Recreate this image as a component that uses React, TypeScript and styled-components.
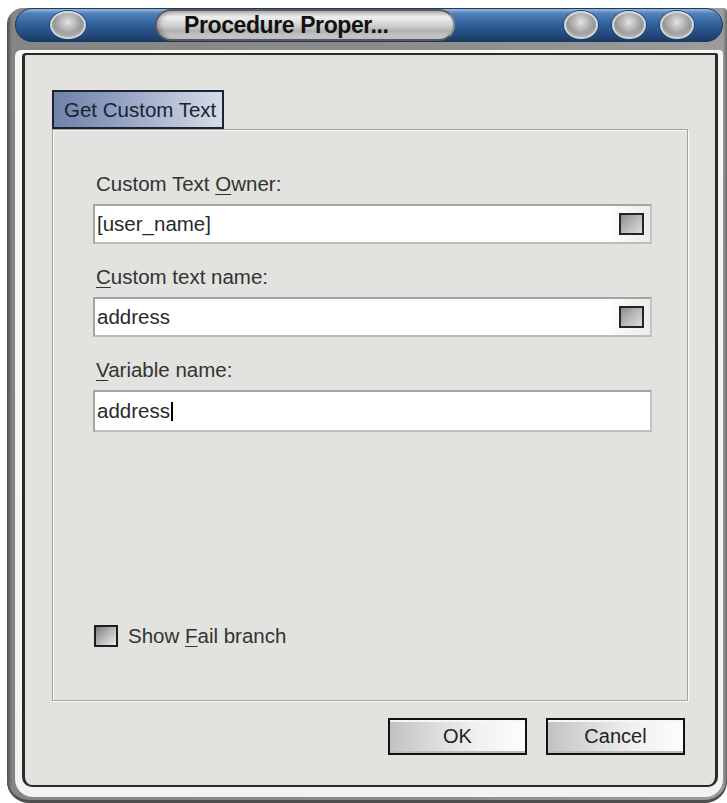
import styled, { createGlobalStyle } from "styled-components";

const GlobalStyle = createGlobalStyle`
  html, body {
    margin: 0;
    padding: 0;
    background: #ffffff;
  }
  body {
    font-family: "Liberation Sans", Arial, sans-serif;
  }
`;

// outer metal frame, the title bar sits on top of it
const Window = styled.div`
  margin: 8px 0 0 7px;
  width: 720px;
  height: 795px;
  box-sizing: border-box;
  padding: 0 4px 6px 8px;
  display: flex;
  flex-direction: column;
  background: linear-gradient(90deg, #4f4f4f 0, #858585 5px, #8a8a8a 50%, #9c9c9c calc(100% - 4px), #6b6b6b 100%);
  border-radius: 16px 4px 22px 22px;
  box-shadow: inset 0 -3px 0 #4e4e4e;
`;

const TitleBar = styled.div`
  height: 34px;
  box-sizing: border-box;
  border-radius: 17px;
  border: 1px solid #1b3a60;
  background: linear-gradient(180deg, #9ab8dc 0%, #5181b9 14%, #30629c 46%, #22497b 82%, #1a3a64 100%);
  display: flex;
  align-items: center;
  padding: 0 28px 0 34px;
`;

const Knob = styled.div<{ $w: number }>`
  width: ${(p) => p.$w}px;
  height: 28px;
  box-sizing: border-box;
  border-radius: 50%;
  border: 2px solid #d4d6d8;
  background: radial-gradient(ellipse at 50% 38%, #e4e4e4 0%, #b4b4b4 38%, #868686 75%, #6e6e6e 100%);
  box-shadow: 0 0 0 1px #23456f, inset 0 -2px 3px rgba(255, 255, 255, 0.35);
  flex-shrink: 0;
`;

const Caption = styled.div`
  margin-left: 69px;
  width: 300px;
  height: 32px;
  box-sizing: border-box;
  border-radius: 16px;
  border: 2px solid #5a5a5a;
  border-right-color: #8a8a8a;
  background: linear-gradient(180deg, #bdbdbd 0%, #eeeeee 22%, #d2d2d2 50%, #b0b0b0 72%, #d6d6d6 100%);
  box-shadow: inset 3px 0 4px rgba(0, 0, 0, 0.25);
  display: flex;
  align-items: center;
  padding-left: 27px;
  font-weight: bold;
  font-size: 23px;
  letter-spacing: -0.4px;
  color: #111;
  white-space: nowrap;
`;

const Spacer = styled.div`
  flex: 1;
`;

const KnobGroup = styled.div`
  display: flex;
  gap: 14px;
`;

const Bezel = styled.div`
  margin-top: 8px;
  flex: 1;
  display: flex;
  padding: 3px 5px 10px 7px;
  background: linear-gradient(180deg, #f6f6f4 0%, #f2f2f0 100%);
  border-radius: 6px 4px 18px 18px;
`;

const Panel = styled.div`
  flex: 1;
  display: flex;
  flex-direction: column;
  box-sizing: border-box;
  border: 3px solid #2a2a2a;
  border-top-width: 2px;
  border-bottom-width: 2px;
  border-radius: 4px 2px 10px 10px;
  background: #e2e2de;
  padding: 35px 27px 30px 27px;
`;

const TabGroup = styled.div`
  flex: 1;
  display: flex;
  flex-direction: column;
`;

const Tab = styled.div`
  align-self: flex-start;
  width: 172px;
  height: 39px;
  box-sizing: border-box;
  border: 2px solid #1c2332;
  background: linear-gradient(90deg, #6f82a8 0%, #8e9ec0 35%, #bcc5d8 75%, #d6dbe6 100%);
  color: #1b2333;
  font-size: 20.5px;
  line-height: 35px;
  padding-left: 10px;
  white-space: nowrap;
  overflow: hidden;
`;

const GroupBox = styled.div`
  flex: 1;
  display: flex;
  flex-direction: column;
  border: 1px solid #a2a2a0;
  box-shadow: inset 1px 1px 0 #fafafa, 1px 1px 0 #fafafa;
  padding: 42px 35px 52px 40px;
`;

const Label = styled.div`
  padding-left: 3px;
  font-size: 20.5px;
  line-height: 24px;
  color: #333;
  margin-bottom: 8px;

  u {
    text-decoration-thickness: 1px;
    text-underline-offset: 3px;
  }
`;

const Field = styled.div<{ $h?: number }>`
  height: ${(p) => p.$h ?? 40}px;
  box-sizing: border-box;
  margin-bottom: 21px;
  display: flex;
  align-items: center;
  background: #ffffff;
  border: 2px solid #a4a4a4;
  border-right-color: #c4c4c4;
  border-bottom-color: #bcbcbc;
  padding-left: 2px;
  font-size: 20.5px;
  color: #2a2a2a;
`;

const Caret = styled.span`
  display: inline-block;
  width: 2px;
  height: 19px;
  background: #000;
  margin-left: 1px;
  vertical-align: middle;
`;

const PickWell = styled.div`
  margin-left: auto;
  align-self: stretch;
  width: 38px;
  display: flex;
  align-items: center;
  justify-content: center;
  background: linear-gradient(90deg, #fbfbfb 0%, #ececea 100%);
`;

const PickButton = styled.div`
  width: 25px;
  height: 22px;
  box-sizing: border-box;
  border: 2px solid #242424;
  background: linear-gradient(135deg, #8c8c8c 0%, #b9b9b9 50%, #dcdcdc 100%);
`;

const CheckRow = styled.label`
  margin-top: auto;
  display: flex;
  align-items: center;
  gap: 10px;
  padding-left: 1px;
  font-size: 20.5px;
  color: #333;

  u {
    text-decoration-thickness: 1px;
    text-underline-offset: 3px;
  }
`;

const CheckBox = styled.span`
  width: 24px;
  height: 22px;
  box-sizing: border-box;
  border: 2px solid #1d1d1d;
  background: linear-gradient(135deg, #7c7c7c 0%, #b8b8b8 50%, #ececec 100%);
`;

const ButtonRow = styled.div`
  margin-top: 17px;
  display: flex;
  justify-content: flex-end;
  gap: 19px;
  padding-right: 3px;
`;

const Button = styled.button`
  width: 139px;
  height: 37px;
  box-sizing: border-box;
  border: 2px solid #121212;
  background: linear-gradient(90deg, #c2c2c2 0%, #d8d8d8 28%, #f1f1f1 65%, #fdfdfd 100%);
  box-shadow: inset 0 2px 0 #f6f6f6, inset 0 -2px 0 #bcbcbc;
  font-family: "Liberation Sans", Arial, sans-serif;
  font-size: 20px;
  color: #222;
  padding: 0;
`;

export default function App() {
  return (
    <>
      <GlobalStyle />
      <Window>
        <TitleBar>
          <Knob $w={36} />
          <Caption>Procedure Proper...</Caption>
          <Spacer />
          <KnobGroup>
            <Knob $w={34} />
            <Knob $w={34} />
            <Knob $w={34} />
          </KnobGroup>
        </TitleBar>
        <Bezel>
          <Panel>
            <TabGroup>
              <Tab>Get Custom Text</Tab>
              <GroupBox>
                <Label>
                  Custom Text <u>O</u>wner:
                </Label>
                <Field>
                  [user_name]
                  <PickWell>
                    <PickButton />
                  </PickWell>
                </Field>
                <Label>
                  <u>C</u>ustom text name:
                </Label>
                <Field>
                  address
                  <PickWell>
                    <PickButton />
                  </PickWell>
                </Field>
                <Label>
                  <u>V</u>ariable name:
                </Label>
                <Field $h={42}>
                  address
                  <Caret />
                </Field>
                <CheckRow>
                  <CheckBox />
                  <span>
                    Show <u>F</u>ail branch
                  </span>
                </CheckRow>
              </GroupBox>
            </TabGroup>
            <ButtonRow>
              <Button>OK</Button>
              <Button>Cancel</Button>
            </ButtonRow>
          </Panel>
        </Bezel>
      </Window>
    </>
  );
}
